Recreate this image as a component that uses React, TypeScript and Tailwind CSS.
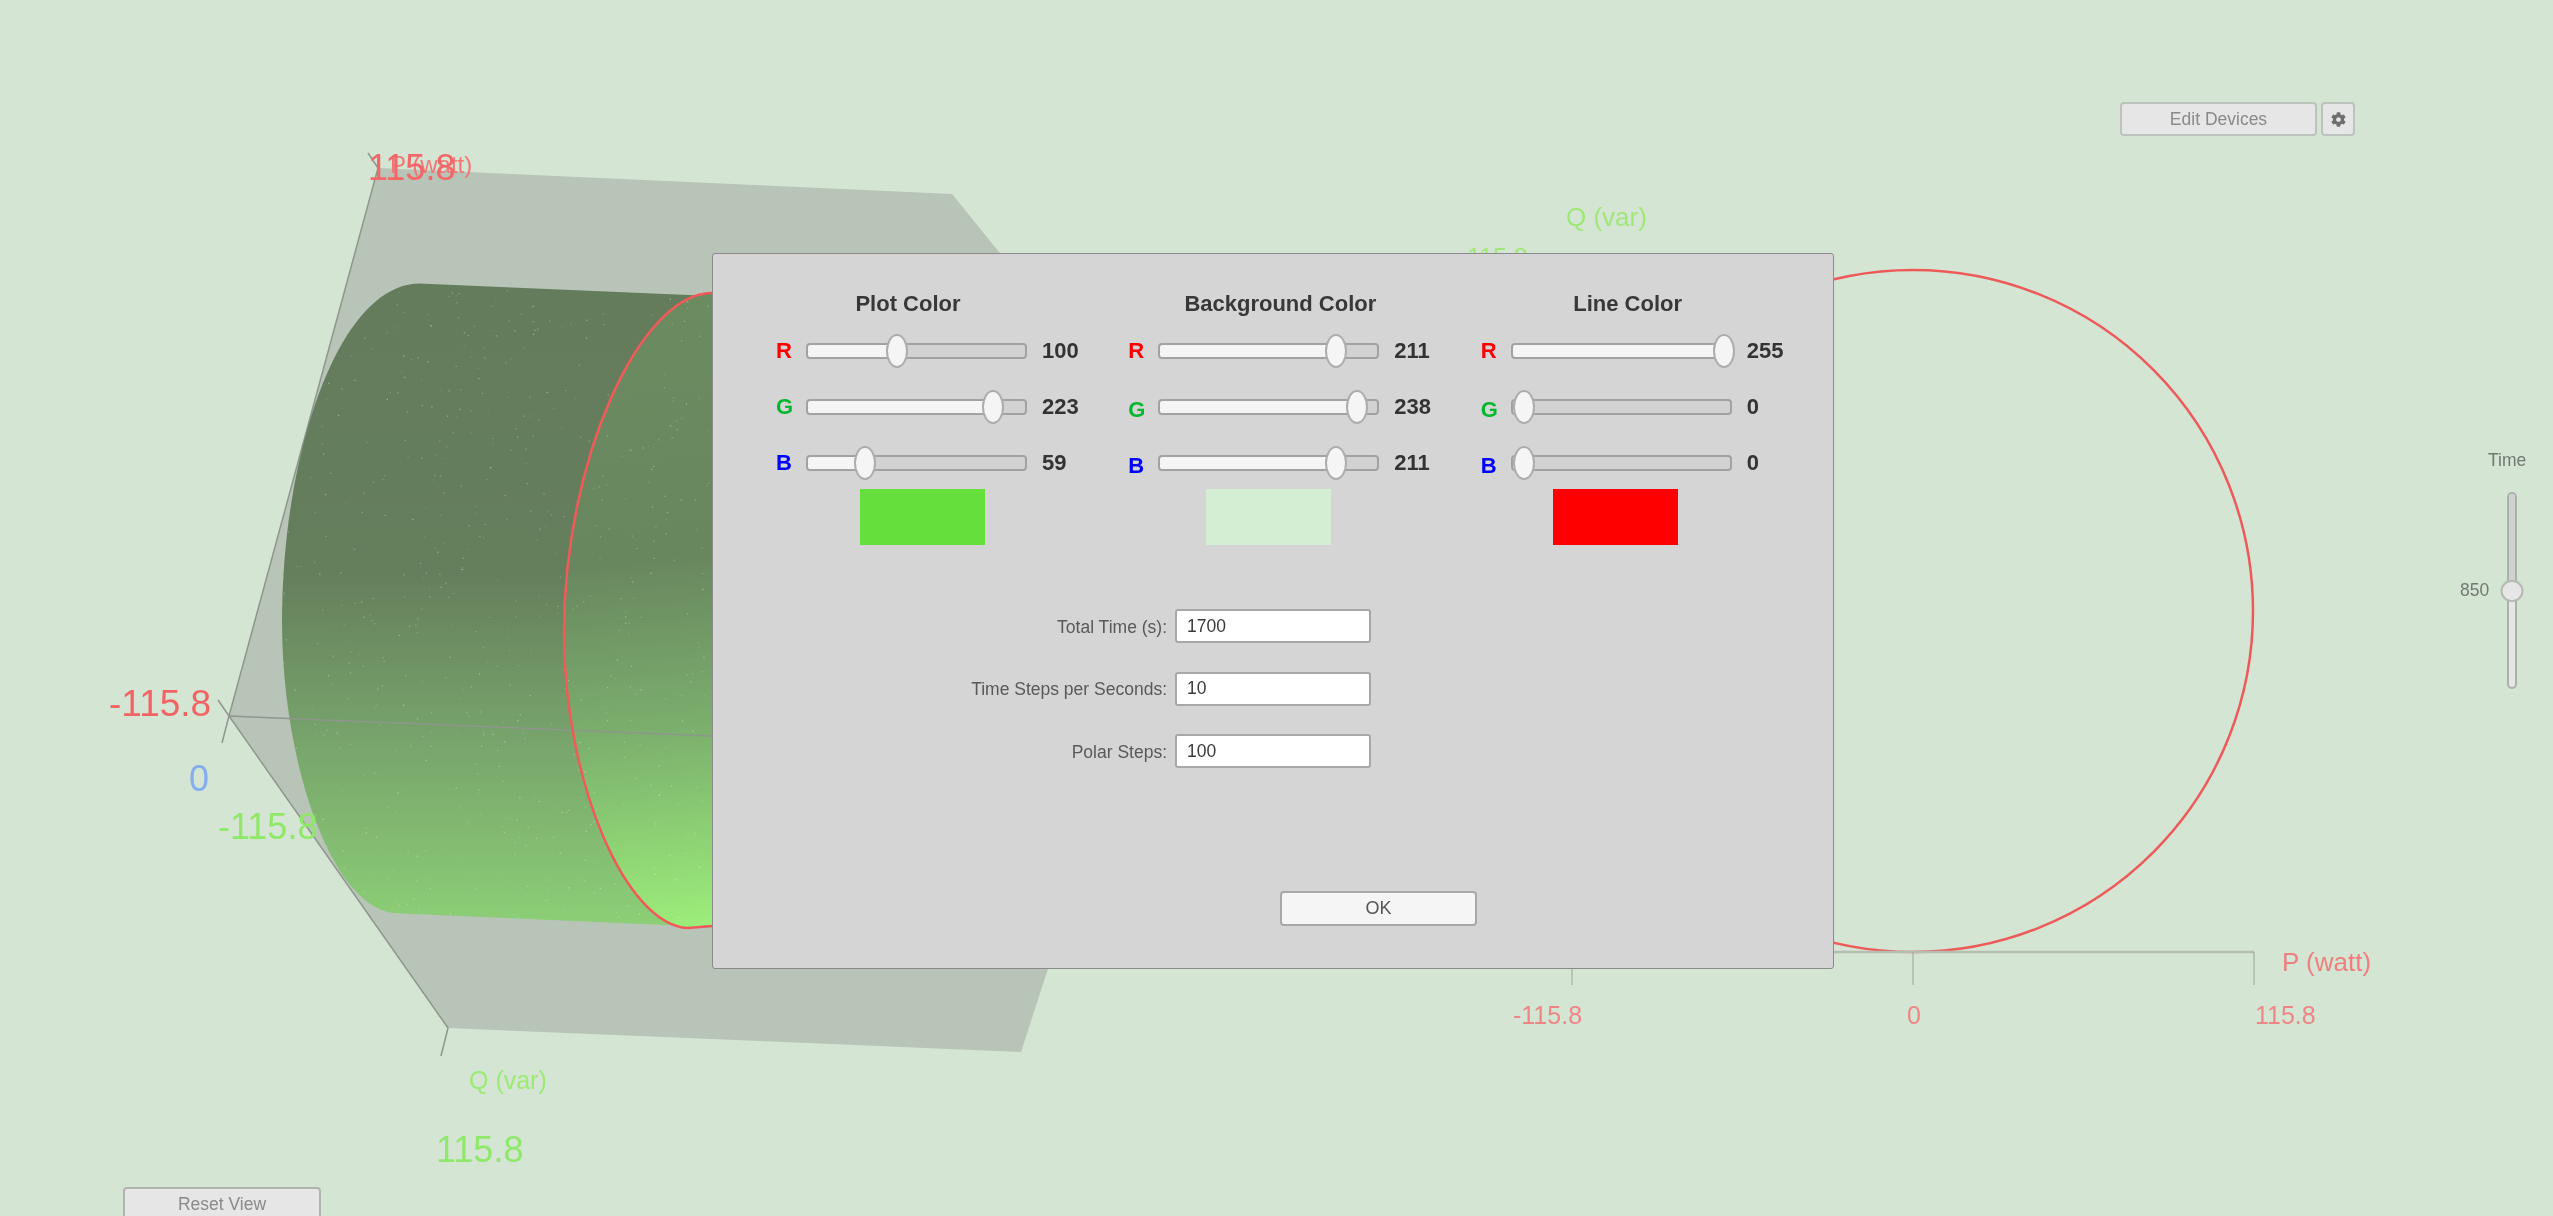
import React from "react";
import { FaCog } from "react-icons/fa";

const speckles: { x: number; y: number; o: number }[] = [];
let seed = 12345;
const rnd = () => {
  seed = (seed * 16807) % 2147483647;
  return seed / 2147483647;
};
for (let i = 0; i < 620; i++) {
  speckles.push({ x: 280 + rnd() * 440, y: 285 + rnd() * 640, o: 0.12 + rnd() * 0.28 });
}

const BODY =
  "M712,296 L420,283.5 C340,283 282,450 282,622 C282,760 330,905 393,913 L712,927 Z";
const FACE =
  "M712,293 C640,293 564,460 564,633 C564,780 625,925 688,928 L712,926";

function Plot() {
  return (
    <svg className="absolute inset-0 h-full w-full" viewBox="0 0 2553 1216">
      <defs>
        <linearGradient id="bodyFill" gradientUnits="userSpaceOnUse" x1="0" y1="283" x2="0" y2="925">
          <stop offset="0" stopColor="#647c5c" />
          <stop offset="0.45" stopColor="#657e5c" />
          <stop offset="0.72" stopColor="#78a56c" />
          <stop offset="1" stopColor="#8ccf76" />
        </linearGradient>
        <linearGradient id="faceFill" gradientUnits="userSpaceOnUse" x1="640" y1="293" x2="700" y2="928">
          <stop offset="0" stopColor="#6b8b61" />
          <stop offset="0.42" stopColor="#69875f" />
          <stop offset="0.68" stopColor="#7bae6d" />
          <stop offset="1" stopColor="#9cee7a" />
        </linearGradient>
        <clipPath id="bodyClip">
          <path d={BODY} />
        </clipPath>
      </defs>

      <polygon
        points="378,168 952,194 1200,500 1021,1052 448,1028 229,716"
        fill="#b8c4b7"
      />
      <g stroke="#8e968d" strokeWidth="1.5" fill="none">
        <path d="M368,153 L378,168 L229,716 L222,743" />
        <path d="M218,700 L229,716 L448,1028 L441,1056" />
      </g>

      <path d={BODY} fill="url(#bodyFill)" />
      <path d={`${FACE} L712,293 Z`} fill="url(#faceFill)" />
      <g clipPath="url(#bodyClip)">
        {speckles.map((s, i) => (
          <rect key={i} x={s.x} y={s.y} width="1.2" height="1.2" fill="#ffffff" opacity={s.o} />
        ))}
      </g>
      <path d="M229,716 L712,736" stroke="#8e968d" strokeWidth="1.5" fill="none" />
      <path d={FACE} stroke="#f25a5a" strokeWidth="2.5" fill="none" />

      <ellipse cx="1913" cy="611" rx="340" ry="341" stroke="#ee5a5a" strokeWidth="2.5" fill="none" />
      <path d="M1834,952 H2254" stroke="#b4bfb2" strokeWidth="2.5" fill="none" />
      <path d="M1572,960 V985 M1913,952 V985 M2254,952 V985" stroke="#a4aea2" strokeWidth="1.2" fill="none" />
    </svg>
  );
}

function ChannelRow({
  letter,
  letterClass,
  value,
  thumb,
  lowered,
}: {
  letter: string;
  letterClass: string;
  value: number;
  thumb: number;
  lowered: boolean;
}) {
  return (
    <div className="flex h-[34px] items-center">
      <span className={`w-[30px] text-[22px] leading-none font-bold ${letterClass} ${lowered ? "pt-[5px]" : ""}`}>
        {letter}
      </span>
      <div className="relative h-[16px] w-[221px] rounded-[4px] border-2 border-[#a2a2a2] bg-[#d2d2d2]">
        <div
          className="absolute top-0 bottom-0 left-0 rounded-[3px] bg-[#f5f5f5]"
          style={{ width: thumb }}
        />
        <div
          className="absolute top-[-11px] h-[34px] w-[22px] -translate-x-1/2 rounded-[50%] border-2 border-[#adadad] bg-[#f5f5f5]"
          style={{ left: thumb }}
        />
      </div>
      <span className="ml-[15px] text-[22px] leading-none font-bold text-[#333333]">{value}</span>
    </div>
  );
}

function ColorColumn({
  title,
  titleClass,
  swatchClass,
  values,
  thumbs,
  lowered,
}: {
  title: string;
  titleClass: string;
  swatchClass: string;
  values: number[];
  thumbs: number[];
  lowered: boolean;
}) {
  return (
    <div className="w-[356px]">
      <h2 className={`h-[26px] text-center text-[22px] leading-[26px] font-bold text-[#383838] ${titleClass}`}>
        {title}
      </h2>
      <div className="mt-[17px] flex flex-col gap-[22px]">
        <ChannelRow letter="R" letterClass="text-[#ff0000]" value={values[0]} thumb={thumbs[0]} lowered={false} />
        <ChannelRow letter="G" letterClass="text-[#00b82e]" value={values[1]} thumb={thumbs[1]} lowered={lowered} />
        <ChannelRow letter="B" letterClass="text-[#0000ff]" value={values[2]} thumb={thumbs[2]} lowered={lowered} />
      </div>
      <div className={`mt-[9px] h-[56px] w-[125px] ${swatchClass}`} />
    </div>
  );
}

function Field({ label, value }: { label: string; value: string }) {
  return (
    <div className="flex h-[34px] items-center">
      <label className="w-[454px] pt-[2px] text-right text-[17.5px] text-[#595959]">{label}</label>
      <input
        readOnly
        value={value}
        className="ml-[8px] h-[34px] w-[196px] rounded-[3px] border-2 border-[#a8a8a8] bg-white pl-[10px] text-[17.5px] text-[#3a3a3a] outline-none"
      />
    </div>
  );
}

function Dialog() {
  return (
    <div className="absolute top-[253px] left-[712px] h-[716px] w-[1122px] rounded-[3px] border border-[#8a8a8a] bg-[#d5d5d5] pt-[37px]">
      <div className="flex pl-[63px]">
        <ColorColumn
          title="Plot Color"
          titleClass="w-[264px]"
          swatchClass="ml-[84px] bg-[#64df3b]"
          values={[100, 223, 59]}
          thumbs={[89, 185, 57]}
          lowered={false}
        />
        <ColorColumn
          title="Background Color"
          titleClass="w-[304px]"
          swatchClass="ml-[78px] bg-[#d3eed3]"
          values={[211, 238, 211]}
          thumbs={[176, 197, 176]}
          lowered={true}
        />
        <ColorColumn
          title="Line Color"
          titleClass="w-[294px]"
          swatchClass="ml-[72px] bg-[#ff0000]"
          values={[255, 0, 0]}
          thumbs={[211, 11, 11]}
          lowered={true}
        />
      </div>
      <div className="mt-[64px] flex flex-col gap-[28.5px]">
        <Field label="Total Time (s):" value="1700" />
        <Field label="Time Steps per Seconds:" value="10" />
        <Field label="Polar Steps:" value="100" />
      </div>
      <button className="mt-[123px] ml-[567px] block h-[35px] w-[197px] rounded-[4px] border-2 border-[#a8a8a8] bg-[#f5f5f5] text-[18px] text-[#555555]">
        OK
      </button>
    </div>
  );
}

function TimeSlider() {
  return (
    <div className="absolute top-[448px] left-[2460px] w-[70px]">
      <div className="pl-[28px] text-[17.5px] leading-[24px] text-[#737873]">Time</div>
      <div className="mt-[20px] flex">
        <div className="flex h-[197px] w-[47px] items-center">
          <span className="text-[17.5px] text-[#737873] pb-[1px]">850</span>
        </div>
        <div className="relative h-[197px] w-[10px] rounded-[5px] border-2 border-[#aab0aa] bg-[#e6e6e6]">
          <div className="absolute top-0 right-0 left-0 h-[96px] rounded-t-[3px] bg-[#ced1ce]" />
          <div className="absolute top-[86px] left-1/2 h-[22px] w-[23px] -translate-x-1/2 rounded-full border-2 border-[#b4b9b4] bg-[#e6e6e6]" />
        </div>
      </div>
    </div>
  );
}

export default function App() {
  return (
    <div className="relative h-[1216px] w-full overflow-hidden bg-[#d4e5d3] font-['Liberation_Sans',sans-serif] blur-[0.5px]">
      <Plot />

      <span className="absolute top-[153px] left-[390px] text-[24px] leading-none whitespace-nowrap text-[#f27878]">P (watt)</span>
      <span className="absolute top-[150px] left-[368px] text-[36px] leading-none whitespace-nowrap text-[#f26868]">115.8</span>
      <span className="absolute top-[685px] left-[109px] text-[37px] leading-none whitespace-nowrap text-[#f26464]">-115.8</span>
      <span className="absolute top-[761px] left-[189px] text-[36px] leading-none whitespace-nowrap text-[#85aef0]">0</span>
      <span className="absolute top-[809px] left-[218px] text-[36px] leading-none whitespace-nowrap text-[#8fe868]">-115.8</span>
      <span className="absolute top-[1068px] left-[469px] text-[25px] leading-none whitespace-nowrap text-[#9bea76]">Q (var)</span>
      <span className="absolute top-[1132px] left-[436px] text-[36px] leading-none whitespace-nowrap text-[#8fe86c]">115.8</span>
      <span className="absolute top-[204px] left-[1566px] text-[26px] leading-none whitespace-nowrap text-[#9fe878]">Q (var)</span>
      <span className="absolute top-[245px] left-[1467px] text-[25px] leading-none whitespace-nowrap text-[#9fe878]">115.8</span>
      <span className="absolute top-[1003px] left-[1513px] text-[25px] leading-none whitespace-nowrap text-[#ef8585]">-115.8</span>
      <span className="absolute top-[1003px] left-[1907px] text-[25px] leading-none whitespace-nowrap text-[#ef8585]">0</span>
      <span className="absolute top-[1003px] left-[2255px] text-[25px] leading-none whitespace-nowrap text-[#ef8585]">115.8</span>
      <span className="absolute top-[949px] left-[2282px] text-[26px] leading-none whitespace-nowrap text-[#ef7f7f]">P (watt)</span>

      <div className="absolute top-[102px] left-[2120px] flex gap-[4px]">
        <button className="h-[34px] w-[197px] rounded-[4px] border-2 border-[#bcc2bc] bg-[#e6e6e6] text-[17.5px] text-[#8a8a8a]">
          Edit Devices
        </button>
        <button className="flex h-[34px] w-[34px] items-center justify-center rounded-[4px] border-2 border-[#bcc2bc] bg-[#e6e6e6] text-[15px] text-[#6e6e6e]">
          <FaCog />
        </button>
      </div>

      <TimeSlider />

      <button className="absolute top-[1187px] left-[123px] h-[35px] w-[198px] rounded-[4px] border-2 border-[#b0b4b0] bg-[#e6e6e6] text-[17.5px] text-[#8a8a8a]">
        Reset View
      </button>

      <Dialog />
    </div>
  );
}
